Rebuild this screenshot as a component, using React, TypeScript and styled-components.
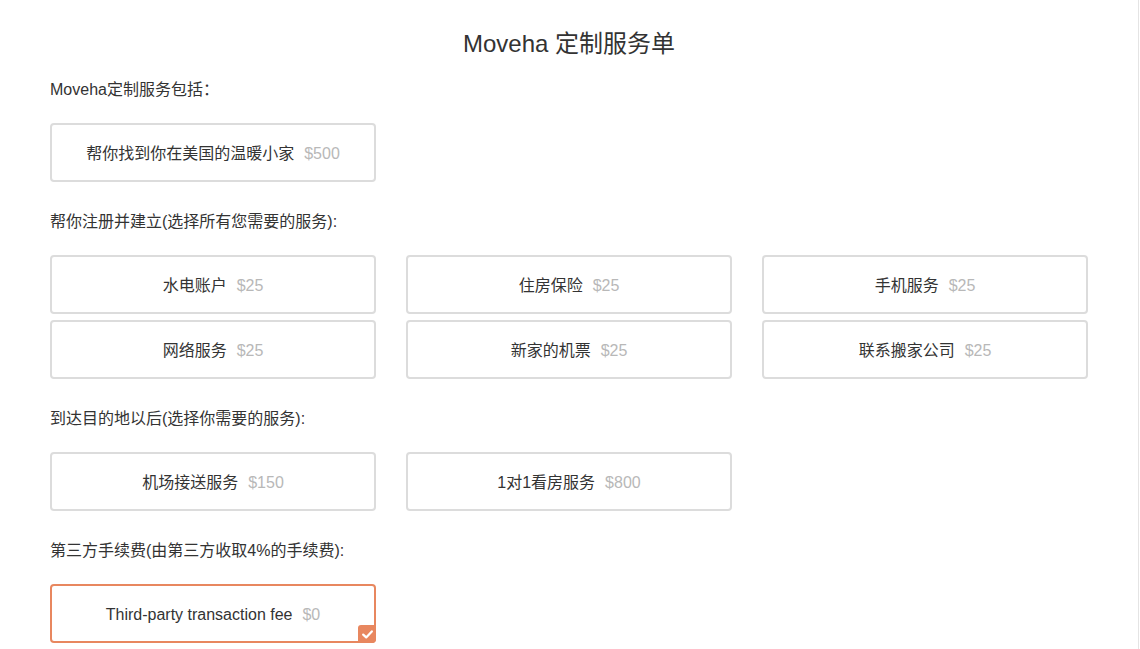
import React from 'react'
import { styled, createGlobalStyle } from 'styled-components'

const GlobalStyle = createGlobalStyle`
	html, body {
		margin: 0;
		padding: 0;
		background: #fff;
	}
	body {
		font-family: 'Liberation Sans', 'Noto Sans CJK SC', sans-serif;
		color: #333;
	}
`

type Service = { name: string; price: string; selected?: boolean }

const sections: { title: string; items: Service[] }[] = [
	{
		title: 'Moveha定制服务包括：',
		items: [{ name: '帮你找到你在美国的温暖小家', price: '$500' }],
	},
	{
		title: '帮你注册并建立(选择所有您需要的服务):',
		items: [
			{ name: '水电账户', price: '$25' },
			{ name: '住房保险', price: '$25' },
			{ name: '手机服务', price: '$25' },
			{ name: '网络服务', price: '$25' },
			{ name: '新家的机票', price: '$25' },
			{ name: '联系搬家公司', price: '$25' },
		],
	},
	{
		title: '到达目的地以后(选择你需要的服务):',
		items: [
			{ name: '机场接送服务', price: '$150' },
			{ name: '1对1看房服务', price: '$800' },
		],
	},
	{
		title: '第三方手续费(由第三方收取4%的手续费):',
		items: [{ name: 'Third-party transaction fee', price: '$0', selected: true }],
	},
]

export default function App() {
	return (
		<>
			<GlobalStyle />
			<Page>
				<Title>Moveha 定制服务单</Title>
				{sections.map((section) => (
					<Section key={section.title}>
						<SectionLabel>{section.title}</SectionLabel>
						<OptionGrid>
							{section.items.map((item) => (
								<OptionCard key={item.name} $selected={item.selected}>
									<OptionName>{item.name}</OptionName>
									<OptionPrice>{item.price}</OptionPrice>
									{item.selected && (
										<CheckBadge>
											<svg width="11" height="9" viewBox="0 0 11 9">
												<path
													d="M1.2 4.6 L4.2 7.4 L9.8 1.4"
													fill="none"
													stroke="#fff"
													strokeWidth="2.2"
													strokeLinecap="round"
													strokeLinejoin="round"
												/>
											</svg>
										</CheckBadge>
									)}
								</OptionCard>
							))}
						</OptionGrid>
					</Section>
				))}
			</Page>
		</>
	)
}

const Page = styled.div`
	box-sizing: border-box;
	width: 1139px;
	min-height: 100vh;
	padding: 26px 0 0 50px;
	border-right: 1px solid #e4e4e4;
`

const Title = styled.h1`
	margin: 0 0 16px;
	width: 1038px;
	text-align: center;
	font-size: 24px;
	line-height: 36px;
	font-weight: normal;
	color: #333;
`

const Section = styled.div`
	margin-bottom: 28px;
`

const SectionLabel = styled.div`
	font-size: 16px;
	line-height: 24px;
	margin-bottom: 21px;
	color: #333;
`

const OptionGrid = styled.div`
	display: grid;
	grid-template-columns: repeat(3, 326px);
	column-gap: 30px;
	row-gap: 6px;
`

const OptionCard = styled.div<{ $selected?: boolean }>`
	position: relative;
	box-sizing: border-box;
	height: 59px;
	text-align: center;
	line-height: 58px;
	border: 2px solid ${(p) => (p.$selected ? '#e8875f' : '#dcdcdc')};
	border-radius: 4px;
	background: #fff;
	font-size: 16px;
	white-space: nowrap;
`

const OptionName = styled.span`
	color: #333;
`

const OptionPrice = styled.span`
	margin-left: 10px;
	color: #b8b8b8;
`

const CheckBadge = styled.span`
	position: absolute;
	right: -2px;
	bottom: -2px;
	width: 18px;
	height: 18px;
	display: flex;
	align-items: center;
	justify-content: center;
	background: #e8875f;
	border-radius: 3px 0 4px 0;
`
